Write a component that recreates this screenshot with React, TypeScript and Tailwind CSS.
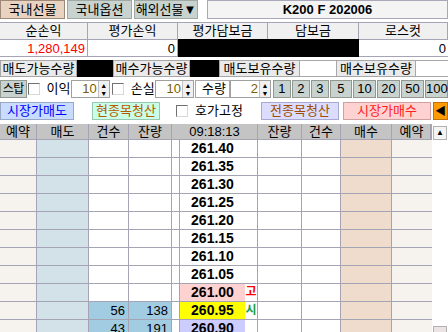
import React from 'react'

interface Row {
  price: string
  priceBg?: string
  tag?: string
  tagColor?: string
  cnt?: string
  qty?: string
}

const rows: Row[] = [
  { price: '261.40' },
  { price: '261.35' },
  { price: '261.30' },
  { price: '261.25' },
  { price: '261.20' },
  { price: '261.15' },
  { price: '261.10' },
  { price: '261.05' },
  { price: '261.00', priceBg: 'bg-[#ffd2d2]', tag: '고', tagColor: 'text-[#ff0000]' },
  { price: '260.95', priceBg: 'bg-[#ffff00]', tag: '시', tagColor: 'text-[#20a040]', cnt: '56', qty: '138' },
  { price: '260.90', priceBg: 'bg-[#ccccff]', cnt: '43', qty: '191' },
]

const line = 'border-[#a4a4b4]'

// classic windows style checkbox
const CheckBox = () => (
  <div className="w-[12px] h-[12px] bg-white border border-t-[#707070] border-l-[#707070] border-b-[#d8d8d8] border-r-[#d8d8d8]" />
)

const Spin = ({ value, w }: { value: string; w: string }) => (
  <div className={`${w} h-[18px] flex border border-[#a0a0a0] bg-white`}>
    <div className="flex-1 text-right pr-[1px] text-[13px] leading-[16px] text-[#7a6000]">{value}</div>
    <div className="w-[11px] flex flex-col border-l border-[#c0c0c0] bg-[#f0f0f0]">
      <div className="flex-1 flex items-center justify-center text-[7px] leading-none">▲</div>
      <div className="flex-1 flex items-center justify-center text-[7px] leading-none">▼</div>
    </div>
  </div>
)

export default function App() {
  return (
    <div
      className="w-[448px] h-[332px] overflow-hidden bg-white text-black"
      style={{ fontFamily: '"Liberation Sans", "Noto Sans CJK KR", sans-serif' }}
    >
      {/* tabs + symbol */}
      <div className="flex h-[19px] gap-[2px]">
        <div className="w-[65px] flex items-center justify-center bg-[#e8d2c0] border border-[#a08878] text-[13px]">국내선물</div>
        <div className="w-[65px] flex items-center justify-center bg-[#c8d2ce] border border-[#a0a8a4] text-[13px]">국내옵션</div>
        <div className="w-[64px] flex items-center justify-center bg-[#c8d2ce] border border-[#a0a8a4] text-[13px]">해외선물▼</div>
        <div className="ml-[7px] flex-1 flex items-center justify-center bg-[#f4f4f4] border border-[#a8a8b8] text-[13px] font-bold">
          K200 F 202006
        </div>
      </div>

      {/* account summary */}
      <div className="mt-[3px] grid grid-cols-[88px_90px_90px_91px_89px] text-[13px]">
        {['순손익', '평가손익', '평가담보금', '담보금', '로스컷'].map((h) => (
          <div key={h} className={`h-[17px] leading-[16px] text-center bg-[#f0f0f0] border-t border-r ${line}`}>
            {h}
          </div>
        ))}
        <div className={`h-[18px] leading-[17px] text-right pr-[2px] bg-white border-t border-r border-b ${line} text-[#ff0000]`}>
          1,280,149
        </div>
        <div className={`h-[18px] leading-[17px] text-right pr-[2px] bg-white border-t border-r border-b ${line}`}>0</div>
        <div className="h-[18px] bg-black" />
        <div className="h-[18px] bg-black" />
        <div className={`h-[18px] leading-[17px] text-right pr-[2px] bg-white border-t border-b ${line}`}>0</div>
      </div>

      {/* quantities */}
      <div className="mt-[3px] flex h-[17px] text-[13px]">
        <div className="w-[77px] bg-[#eaeaea] border border-[#a8a8a8] leading-[15px] text-center">매도가능수량</div>
        <div className="w-[36px] bg-black" />
        <div className="w-[77px] bg-[#eaeaea] border border-[#a8a8a8] leading-[15px] text-center">매수가능수량</div>
        <div className="w-[29px] bg-black" />
        <div className="w-[81px] bg-[#eaeaea] border border-[#a8a8a8] leading-[15px] text-center">매도보유수량</div>
        <div className="w-[36px] bg-white border-y border-[#a8a8a8]" />
        <div className="w-[80px] bg-[#eaeaea] border border-[#a8a8a8] leading-[15px] text-center">매수보유수량</div>
        <div className="flex-1 bg-white border-y border-[#a8a8a8]" />
      </div>

      {/* stop settings */}
      <div className="mt-[3px] flex items-center h-[18px] text-[13px]">
        <div className="w-[28px] h-[18px] bg-[#c8d2ce] border border-[#909890] leading-[16px] text-center whitespace-nowrap text-[12px] tracking-[-0.5px]">스탑</div>
        <div className="ml-[1px]"><CheckBox /></div>
        <div className="ml-[7px] w-[26px]">이익</div>
        <Spin value="10" w="w-[41px]" />
        <div className="ml-[2px]"><CheckBox /></div>
        <div className="ml-[7px] w-[26px]">손실</div>
        <Spin value="10" w="w-[41px]" />
        <div className="ml-[1px] w-[37px] h-[18px] border border-[#a8a8a8] leading-[16px] pl-[6px] overflow-hidden whitespace-nowrap">수량</div>
        <Spin value="2" w="w-[43px]" />
        <div className="ml-[2px] flex gap-[1px]">
          {['1', '2', '3', '5', '10', '20', '50', '100'].map((n, i) => (
            <div
              key={n}
              className={`${i < 3 ? 'w-[18px]' : i === 3 ? 'w-[22px]' : 'w-[23px]'} h-[18px] bg-[#c8d2ce] border border-[#909890] leading-[16px] text-center`}
            >
              {n}
            </div>
          ))}
        </div>
      </div>

      {/* order buttons */}
      <div className="mt-[4px] flex items-center h-[18px] text-[13px]">
        <div className="w-[74px] h-[18px] bg-[#c8dcff] border border-[#98a8c8] text-[#0000ff] leading-[16px] text-center">시장가매도</div>
        <div className="ml-[18px] w-[68px] h-[18px] bg-[#c8ffe6] border border-[#98c8b0] text-[#b85800] leading-[16px] text-center">현종목청산</div>
        <div className="ml-[16px]"><CheckBox /></div>
        <div className="ml-[7px]">호가고정</div>
        <div className="ml-auto w-[78px] h-[18px] bg-[#dcdcff] border border-[#a8a8d0] text-[#a04c00] leading-[16px] text-center">전종목청산</div>
        <div className="ml-[4px] w-[88px] h-[18px] bg-[#ffd2d2] border border-[#d0a0a0] text-[#ff2020] leading-[16px] text-center">시장가매수</div>
        <div className="ml-[2px] w-[15px] h-[18px] bg-[#ff9a00] border border-[#c07000] flex items-center justify-center text-[11px] leading-none">◀</div>
      </div>

      {/* order book */}
      <div className="mt-[4px] flex">
        <div className="w-[432px] border-r-2 border-[#a0a0b0] text-[13px]">
          <div className="grid grid-cols-[37px_52px_40px_43px_86px_44px_39px_51px_40px] h-[16px] leading-[15px] bg-[#c4c4c4]">
            {['예약', '매도', '건수', '잔량', '09:18:13', '잔량', '건수', '매수', '예약'].map((h, i) => (
              <div key={i} className={`text-center border-r border-b ${line}`}>{h}</div>
            ))}
          </div>
          {rows.map((r) => (
            <div key={r.price} className="grid grid-cols-[37px_52px_40px_43px_8px_65px_13px_44px_39px_51px_40px] h-[18px] leading-[17px]">
              <div className={`bg-[#f6f2ee] border-r border-b ${line}`} />
              <div className={`bg-[#d2e2e8] border-r border-b ${line}`} />
              <div className={`${r.cnt ? 'bg-[#a2cce2]' : 'bg-white'} text-right pr-[3px] border-r border-b ${line}`}>{r.cnt}</div>
              <div className={`${r.qty ? 'bg-[#a2cce2]' : 'bg-white'} text-right pr-[3px] border-r border-b ${line}`}>{r.qty}</div>
              <div className={`bg-white border-r border-b ${line}`} />
              <div className={`${r.priceBg ?? 'bg-white'} text-center font-bold text-[14px] border-b ${line}`}>{r.price}</div>
              <div className={`bg-white text-center text-[12px] font-bold border-r border-b ${line} ${r.tagColor ?? ''}`}>{r.tag}</div>
              <div className={`bg-white border-r border-b ${line}`} />
              <div className={`bg-white border-r border-b ${line}`} />
              <div className={`bg-[#f0dccc] border-r border-b ${line}`} />
              <div className={`bg-[#f6f2ee] border-b ${line}`} />
            </div>
          ))}
        </div>
        {/* scrollbar */}
        <div className="flex-1 flex flex-col bg-white">
          <div className="mx-[1px] mt-[2px] h-[14px] border border-[#b0b0b0] bg-[#f4f4f4] flex items-center justify-center text-[8px] leading-none">▲</div>
          <div className="flex-1" />
          <div className="mx-[1px] mt-auto h-[12px] border border-[#b0b0b0] bg-[#ece4e4]" />
        </div>
      </div>
    </div>
  )
}
